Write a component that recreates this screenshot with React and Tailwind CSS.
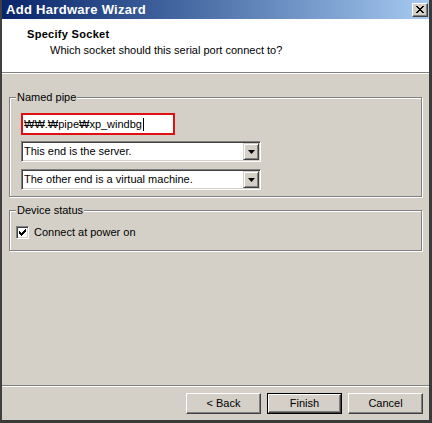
import React from "react";

const font = { fontFamily: '"Liberation Sans", Arial, "Noto Sans CJK KR", sans-serif' };

function Raised({ className = "", children }) {
  return (
    <div
      className={
        "flex items-center justify-center bg-[#d4d0c8] border border-t-white border-l-white border-r-[#404040] border-b-[#404040] shadow-[inset_-1px_-1px_0_#808080] " +
        className
      }
    >
      {children}
    </div>
  );
}

function Dropdown({ text }) {
  return (
    <div className="flex w-[240px] h-[21px] bg-white border border-t-[#808080] border-l-[#808080] border-r-white border-b-white shadow-[inset_1px_1px_0_#404040,inset_-1px_-1px_0_#d4d0c8] p-[1px]">
      <div className="flex-1 flex items-center pl-[1px] text-[11px] leading-[13px] text-black">{text}</div>
      <div className="flex w-[16px] h-[17px] items-center justify-center bg-[#d4d0c8] border border-t-[#d4d0c8] border-l-[#d4d0c8] border-r-[#404040] border-b-[#404040] shadow-[inset_1px_1px_0_#fff,inset_-1px_-1px_0_#808080]">
        <svg width="7" height="4" viewBox="0 0 7 4">
          <polygon points="0,0 7,0 3.5,4" fill="#000" />
        </svg>
      </div>
    </div>
  );
}

function Group({ label, className = "", children }) {
  return (
    <div
      className={
        "relative border border-[#808080] shadow-[inset_1px_1px_0_#fff,1px_1px_0_#fff] " + className
      }
    >
      <div className="absolute left-[6px] top-[-7px] bg-[#d4d0c8] px-[1px] text-[11px] leading-[13px] text-black">
        {label}
      </div>
      {children}
    </div>
  );
}

export default function App() {
  return (
    <div
      style={font}
      className="flex flex-col w-[432px] h-[423px] bg-[#d4d0c8] border-l-2 border-r-[3px] border-b-[3px] border-l-[#404040] border-r-[#3a3a3a] border-b-[#3a3a3a] overflow-hidden"
    >
      {/* Title bar */}
      <div className="flex items-center h-[19px] bg-gradient-to-r from-[#0a246a] to-[#a6caf0] pl-[4px] pr-[1px]">
        <div className="flex-1 text-white font-bold text-[13px] leading-[16px] tracking-[0.3px]">
          Add Hardware Wizard
        </div>
        <Raised className="w-[16px] h-[14px]">
          <svg width="8" height="7" viewBox="0 0 8 7" shapeRendering="crispEdges">
            <path d="M0 0h2v1H0zM6 0h2v1H6zM1 1h2v1H1zM5 1h2v1H5zM2 2h4v1H2zM3 3h2v1H3zM2 4h4v1H2zM1 5h2v1H1zM5 5h2v1H5zM0 6h2v1H0zM6 6h2v1H6z" fill="#000" />
          </svg>
        </Raised>
      </div>

      {/* Header */}
      <div className="h-[53px] bg-white pt-[9px]">
        <div className="pl-[25px] font-bold text-[11px] leading-[13px] tracking-[0.3px] text-black">Specify Socket</div>
        <div className="pl-[48px] mt-[3px] text-[11px] leading-[13px] text-black">
          Which socket should this serial port connect to?
        </div>
      </div>
      <div className="h-px bg-[#808080]" />
      <div className="h-px bg-white" />

      {/* Body */}
      <div className="flex flex-col px-[7px]">
        <Group label="Named pipe" className="mt-[23px] h-[100px] pt-[15px] pl-[11px]">
          <div className="flex items-center w-[154px] h-[22px] bg-white border-2 border-[#e01010] pl-[1px] text-[11px] leading-[13px] text-black">
            <span>₩₩.₩pipe₩xp_windbg</span>
            <span className="w-px h-[13px] bg-black ml-px" />
          </div>
          <div className="mt-[6px]">
            <Dropdown text="This end is the server." />
          </div>
          <div className="mt-[7px]">
            <Dropdown text="The other end is a virtual machine." />
          </div>
        </Group>

        <Group label="Device status" className="mt-[13px] h-[41px] pt-[15px] pl-[6px]">
          <div className="flex items-center">
            <div className="flex items-center justify-center w-[13px] h-[13px] bg-white border border-t-[#808080] border-l-[#808080] border-r-white border-b-white shadow-[inset_1px_1px_0_#404040,inset_-1px_-1px_0_#d4d0c8]">
              <svg width="7" height="7" viewBox="0 0 7 7" shapeRendering="crispEdges">
                <path d="M6 0h1v3H6zM5 1h1v3H5zM4 2h1v3H4zM3 3h1v3H3zM2 4h1v3H2zM1 3h1v3H1zM0 2h1v3H0z" fill="#000" />
              </svg>
            </div>
            <span className="ml-[5px] text-[11px] leading-[13px] text-black">Connect at power on</span>
          </div>
        </Group>
      </div>

      <div className="flex-1" />

      {/* Bottom */}
      <div className="h-px bg-[#808080]" />
      <div className="h-px bg-white" />
      <div className="flex justify-end gap-[6px] pt-[6px] pb-[6px] pr-[6px]">
        <Raised className="w-[75px] h-[21px] text-[11px] leading-[13px] text-black">&lt; Back</Raised>
        <div className="w-[75px] h-[21px] border border-black flex">
          <Raised className="flex-1 text-[11px] leading-[13px] text-black">Finish</Raised>
        </div>
        <Raised className="w-[75px] h-[21px] text-[11px] leading-[13px] text-black">Cancel</Raised>
      </div>
    </div>
  );
}
